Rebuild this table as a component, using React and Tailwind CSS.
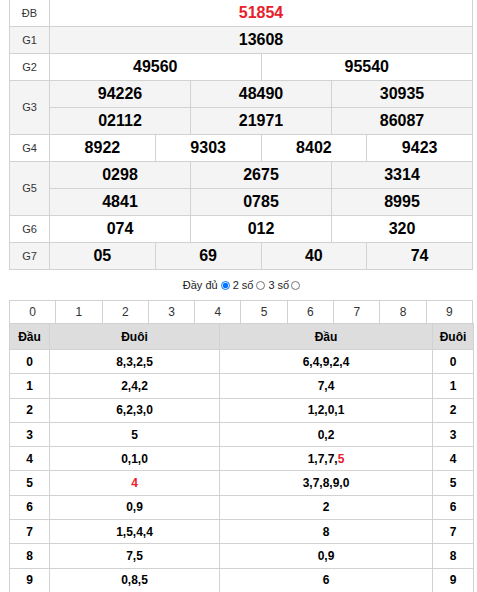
import React from "react";

const B = "border border-[#d2d2d2]";
const RED = "text-[#e8202a]";

function Label({ children, rowSpan }) {
  return (
    <td rowSpan={rowSpan} className={`${B} text-center text-[11px] text-[#333] font-normal`}>
      {children}
    </td>
  );
}

function Num({ children, span, red }) {
  return (
    <td colSpan={span} className={`${B} text-center text-[16px] font-bold ${red ? RED : "text-black"}`}>
      {children}
    </td>
  );
}

const rows = [
  ["8,3,2,5", "6,4,9,2,4"],
  ["2,4,2", "7,4"],
  ["6,2,3,0", "1,2,0,1"],
  ["5", "0,2"],
  ["0,1,0", <>1,7,7,<span className={RED}>5</span></>],
  [<span className={RED}>4</span>, "3,7,8,9,0"],
  ["0,9", "2"],
  ["1,5,4,4", "8"],
  ["7,5", "0,9"],
  ["0,8,5", "6"],
];

export default function App() {
  const tr = "h-[27px]";
  return (
    <div className="bg-white w-[477px] h-[592px] overflow-hidden" style={{ fontFamily: '"Liberation Sans", Arial, sans-serif' }}>
      <table className="ml-[9px] -mt-px w-[464px] table-fixed border-collapse">
        <colgroup>
          <col className="w-[40px]" />
          {Array.from({ length: 12 }).map((_, i) => (
            <col key={i} />
          ))}
        </colgroup>
        <tbody>
          <tr className={`${tr} bg-white`}>
            <Label>ĐB</Label>
            <Num span={12} red>51854</Num>
          </tr>
          <tr className={`${tr} bg-[#f4f4f4]`}>
            <Label>G1</Label>
            <Num span={12}>13608</Num>
          </tr>
          <tr className={`${tr} bg-white`}>
            <Label>G2</Label>
            <Num span={6}>49560</Num>
            <Num span={6}>95540</Num>
          </tr>
          <tr className={`${tr} bg-[#f4f4f4]`}>
            <Label rowSpan={2}>G3</Label>
            <Num span={4}>94226</Num>
            <Num span={4}>48490</Num>
            <Num span={4}>30935</Num>
          </tr>
          <tr className={`${tr} bg-[#f4f4f4]`}>
            <Num span={4}>02112</Num>
            <Num span={4}>21971</Num>
            <Num span={4}>86087</Num>
          </tr>
          <tr className={`${tr} bg-white`}>
            <Label>G4</Label>
            <Num span={3}>8922</Num>
            <Num span={3}>9303</Num>
            <Num span={3}>8402</Num>
            <Num span={3}>9423</Num>
          </tr>
          <tr className={`${tr} bg-[#f4f4f4]`}>
            <Label rowSpan={2}>G5</Label>
            <Num span={4}>0298</Num>
            <Num span={4}>2675</Num>
            <Num span={4}>3314</Num>
          </tr>
          <tr className={`${tr} bg-[#f4f4f4]`}>
            <Num span={4}>4841</Num>
            <Num span={4}>0785</Num>
            <Num span={4}>8995</Num>
          </tr>
          <tr className={`${tr} bg-white`}>
            <Label>G6</Label>
            <Num span={4}>074</Num>
            <Num span={4}>012</Num>
            <Num span={4}>320</Num>
          </tr>
          <tr className={`${tr} bg-[#f4f4f4]`}>
            <Label>G7</Label>
            <Num span={3}>05</Num>
            <Num span={3}>69</Num>
            <Num span={3}>40</Num>
            <Num span={3}>74</Num>
          </tr>
        </tbody>
      </table>

      <div className="h-[30px] flex items-center justify-center text-[11px] text-[#222] pl-[6px]">
        <span>Đầy đủ</span>
        <input type="radio" name="m" defaultChecked className="w-[9px] h-[9px] m-0 mx-[3px]" />
        <span>2 số</span>
        <input type="radio" name="m" className="w-[9px] h-[9px] m-0 mx-[3px]" />
        <span>3 số</span>
        <input type="radio" name="m" className="w-[9px] h-[9px] m-0 ml-[2px]" />
      </div>

      <table className="ml-[9px] w-[464px] table-fixed border-collapse">
        <tbody>
          <tr className="h-[23px] bg-white">
            {Array.from({ length: 10 }).map((_, i) => (
              <td key={i} className={`${B} text-center text-[12px] text-[#333]`}>
                {i}
              </td>
            ))}
          </tr>
        </tbody>
      </table>

      <table className="ml-[9px] -mt-px w-[464px] table-fixed border-collapse">
        <colgroup>
          <col className="w-[40px]" />
          <col className="w-[170px]" />
          <col className="w-[213px]" />
          <col className="w-[41px]" />
        </colgroup>
        <tbody>
          <tr className="h-[26px] bg-[#dddddd]">
            <th className={`${B} text-center text-[12px] font-bold text-black`}>Đầu</th>
            <th className={`${B} text-center text-[12px] font-bold text-black`}>Đuôi</th>
            <th className={`${B} text-center text-[12px] font-bold text-black`}>Đầu</th>
            <th className={`${B} text-center text-[12px] font-bold text-black`}>Đuôi</th>
          </tr>
          {rows.map((r, i) => (
            <tr key={i} className="h-[24.3px] bg-white">
              <td className={`${B} text-center text-[12px] font-bold text-black`}>{i}</td>
              <td className={`${B} text-center text-[12px] font-bold text-black`}>{r[0]}</td>
              <td className={`${B} text-center text-[12px] font-bold text-black`}>{r[1]}</td>
              <td className={`${B} text-center text-[12px] font-bold text-black`}>{i}</td>
            </tr>
          ))}
        </tbody>
      </table>
    </div>
  );
}
